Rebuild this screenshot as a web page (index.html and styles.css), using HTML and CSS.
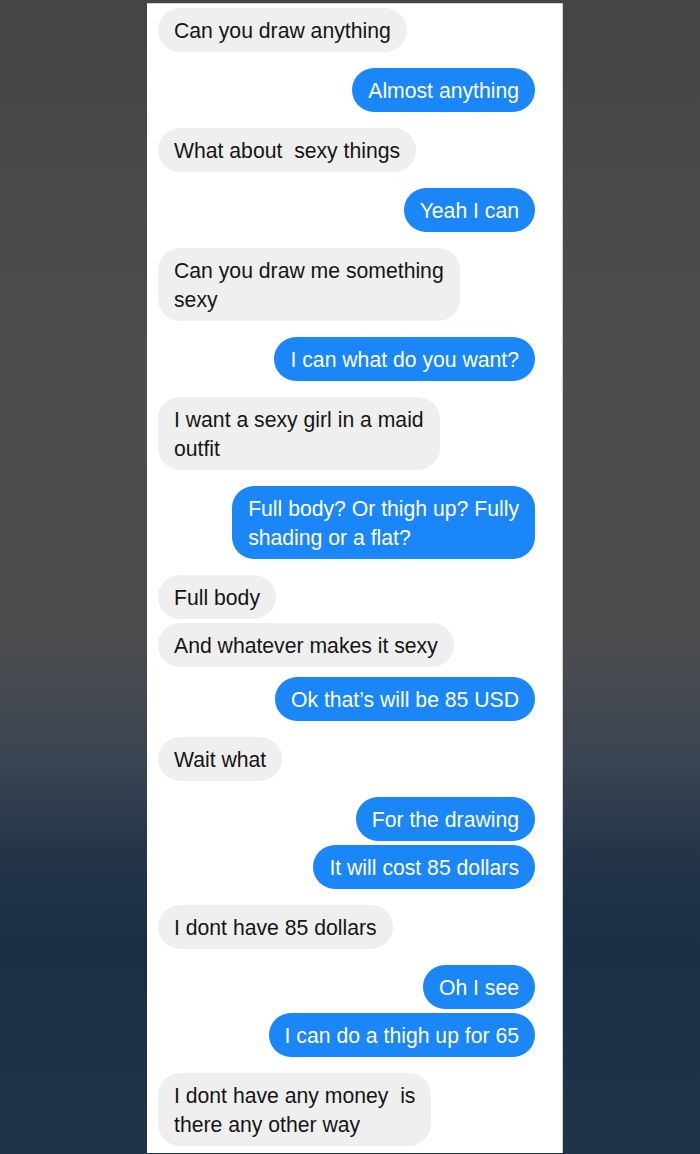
FILE: index.html
```html
<!DOCTYPE html>
<html lang="en">

<head>
    <meta charset="UTF-8">
    <meta name="viewport" content="width=device-width, initial-scale=1.0">
    <title>Chat</title>

    <link rel="stylesheet" href="styles.css">
</head>

<body>
    <div class="chat">
        <div class="msg in">Can you draw anything</div>
        <div class="msg out">Almost anything</div>
        <div class="msg in">What about&nbsp; sexy things</div>
        <div class="msg out">Yeah I can</div>
        <div class="msg in">Can you draw me something<br>sexy</div>
        <div class="msg out">I can what do you want?</div>
        <div class="msg in">I want a sexy girl in a maid<br>outfit</div>
        <div class="msg out">Full body? Or thigh up? Fully<br>shading or a flat?</div>
        <div class="msg in">Full body</div>
        <div class="msg in next">And whatever makes it sexy</div>
        <div class="msg out close">Ok that’s will be 85 USD</div>
        <div class="msg in">Wait what</div>
        <div class="msg out">For the drawing</div>
        <div class="msg out next">It will cost 85 dollars</div>
        <div class="msg in">I dont have 85 dollars</div>
        <div class="msg out">Oh I see</div>
        <div class="msg out next">I can do a thigh up for 65</div>
        <div class="msg in">I dont have any money&nbsp; is<br>there any other way</div>
    </div>
</body>

</html>
```

FILE: styles.css
```css
* {
    margin: 0;
    padding: 0;
    box-sizing: border-box;
}

html,
body {
    height: 100%;
}

body {
    background: linear-gradient(to bottom, #444444 0%, #4d4d4d 30%, #4b4c4e 56%, #3a4452 66%, #24354a 74%, #1a2e45 82%, #1f3349 100%);
    font-family: "Liberation Sans", Arial, sans-serif;
    overflow: hidden;
}

.chat {
    width: 416px;
    height: 1150px;
    margin: 3px 0 0 147px;
    background: #fff;
    border-top: 1px solid #d6d6d6;
    border-right: 1px solid #d0d0d0;
    padding: 4px 27px 0 11px;
    display: flex;
    flex-direction: column;
    align-items: flex-start;
}

.msg {
    font-size: 21.2px;
    line-height: 29px;
    padding: 7.5px 16px;
    border-radius: 22px;
    white-space: nowrap;
    margin-top: 16px;
}

.msg:first-child {
    margin-top: 0;
}

.msg.next {
    margin-top: 4px;
}

.msg.close {
    margin-top: 10px;
}

.in {
    background: #efefef;
    color: #151515;
}

.out {
    align-self: flex-end;
    background: #1b86f8;
    color: #fff;
}
```
